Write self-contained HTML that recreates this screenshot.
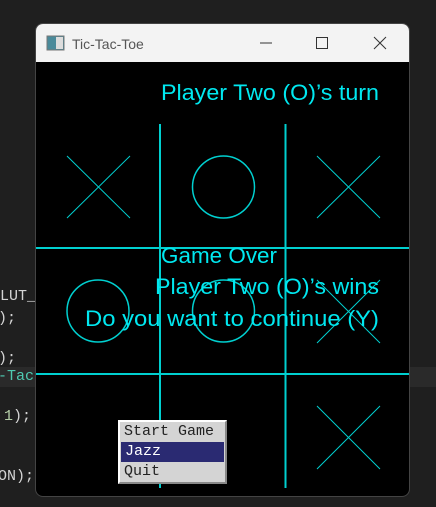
<!DOCTYPE html>
<html><head><style>
html,body{margin:0;padding:0;width:436px;height:507px;overflow:hidden;background:#1f1f1f;font-family:"Liberation Sans",sans-serif;}
.code{position:absolute;font-family:"Liberation Mono",monospace;font-size:15px;color:#d4d4d4;}
.win{position:absolute;left:35px;top:23px;width:375px;height:474px;border-radius:8px;overflow:hidden;background:#000;border:1px solid #444;box-sizing:border-box;}
.title{position:absolute;left:0;top:0;width:100%;height:38px;background:#f3f3f3;}
.menu{position:absolute;left:118px;top:420px;width:109px;height:64px;background:#d4d4d4;border:2px solid;border-color:#fff #888 #888 #fff;box-sizing:border-box;font-family:"Liberation Mono",monospace;font-size:15px;color:#222;}
.menu div{height:20px;line-height:20px;padding-left:4px;}
</style></head><body>
<div class="code" style="left:0px;top:288px">LUT_I</div>
<div class="code" style="left:-2px;top:310px">);</div>
<div class="code" style="left:-2px;top:350px">);</div>
<div style="position:absolute;left:0;top:367px;width:436px;height:20px;background:#2a2a2a"></div>
<div class="code" style="left:-2px;top:368px;color:#4ec9b0">-Tac</div>
<div class="code" style="left:4px;top:408px"><span style="color:#b5cea8">1</span>);</div>
<div class="code" style="left:-2px;top:468px">ON);</div>
<div class="win">
 <div class="title">
  <svg width="375" height="38" style="position:absolute;left:0;top:0">
   <rect x="11" y="12" width="17" height="14" fill="#4a8a9a" stroke="#777"/>
   <rect x="20" y="13" width="7" height="12" fill="#ddd"/>
   <text x="36" y="25" font-family="Liberation Sans" font-size="14" fill="#555">Tic-Tac-Toe</text>
   <line x1="224" y1="19" x2="236" y2="19" stroke="#333"/>
   <rect x="280.5" y="13.5" width="11" height="11" fill="none" stroke="#333"/>
   <path d="M338 13L350 25M350 13L338 25" stroke="#333"/>
  </svg>
 </div>
 <svg width="375" height="436" style="position:absolute;left:0;top:38px" >
  <g transform="translate(-35,-61)" stroke="#00d0d0" fill="none">
   <line x1="159" y1="123" x2="159" y2="487" stroke-width="2"/>
   <line x1="284.5" y1="123" x2="284.5" y2="487" stroke-width="2"/>
   <line x1="35" y1="247" x2="410" y2="247" stroke-width="2"/>
   <line x1="35" y1="373" x2="410" y2="373" stroke-width="2"/>
   <path d="M66 155L129 217M129 155L66 217"/>
   <circle cx="222.5" cy="186" r="31" stroke-width="1.5"/>
   <path d="M316 155L379 217M379 155L316 217"/>
   <circle cx="97" cy="310" r="31" stroke-width="1.5"/>
   <circle cx="222.5" cy="310" r="31" stroke-width="1.5"/>
   <path d="M316 279L379 342M379 279L316 342"/>
   <path d="M316 405L379 468M379 405L316 468"/>
  </g>
  <g transform="translate(-35,-61)" fill="#00e8f0" font-family="Liberation Sans" font-size="22" lengthAdjust="spacingAndGlyphs">
   <text x="160" y="99" textLength="218" lengthAdjust="spacingAndGlyphs">Player Two (O)’s turn</text>
   <text x="160" y="262" textLength="116" lengthAdjust="spacingAndGlyphs">Game Over</text>
   <text x="154" y="293" textLength="224" lengthAdjust="spacingAndGlyphs">Player Two (O)’s wins</text>
   <text x="84" y="325" textLength="294" lengthAdjust="spacingAndGlyphs">Do you want to continue (Y)</text>
  </g>
 </svg>
</div>
<div class="menu">
 <div>Start Game</div>
 <div style="background:#2a2a72;color:#fff;margin:0 1px">Jazz</div>
 <div>Quit</div>
</div>
</body></html>
